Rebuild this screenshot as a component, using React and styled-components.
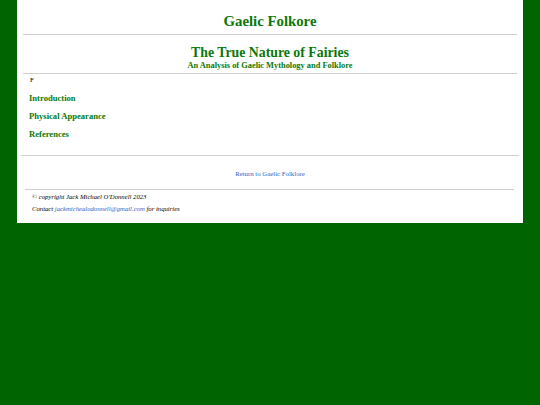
import React from "react";
import styled, { createGlobalStyle } from "styled-components";

const Global = createGlobalStyle`
  html, body { margin: 0; padding: 0; }
  body {
    background: #006400;
    font-family: "Liberation Serif", "Times New Roman", serif;
    color: #000;
    min-height: 405px;
  }
`;

const Page = styled.div`
  background: #fff;
  margin: 0 17px;
  padding: 12px 0 9px;
`;

const Rule = styled.hr`
  border: 0;
  height: 1px;
  background: #cfcfcf;
  margin: ${(p) => p.$margin || "0"};
`;

const SiteTitle = styled.h1`
  margin: 0 0 4px;
  text-align: center;
  color: #0a780a;
  font-size: 14.8px;
  line-height: 18px;
  font-weight: bold;
`;

const ArticleHead = styled.header`
  text-align: center;
  color: #0a780a;
  padding: 10px 0 2px;
`;

const ArticleTitle = styled.h2`
  margin: 0;
  font-size: 13.8px;
  line-height: 16px;
  font-weight: bold;
`;

const Subtitle = styled.h3`
  margin: 0;
  font-size: 8.4px;
  line-height: 10px;
  font-weight: bold;
`;

const Body = styled.main`
  padding: 2px 12px 12px;
`;

const Fragment = styled.p`
  margin: 0 0 4px 1px;
  font-size: 7px;
  line-height: 9px;
`;

const Nav = styled.nav`
  display: flex;
  flex-direction: column;
`;

const NavLink = styled.a`
  color: #0a780a;
  font-weight: bold;
  font-size: 8.6px;
  line-height: 18px;
  text-decoration: none;
`;

const ReturnRow = styled.div`
  text-align: center;
  padding: 13px 0 11px;
  font-size: 6.8px;
  line-height: 9px;
`;

const BlueLink = styled.a`
  color: #2f5fc4;
  text-decoration: none;
`;

const Footer = styled.footer`
  padding: 1px 15px 0;
  font-style: italic;
  font-size: 6.7px;
  line-height: 11.5px;
`;

const FooterLine = styled.p`
  margin: 0;
`;

export default function App() {
  return (
    <>
      <Global />
      <Page>
        <SiteTitle>Gaelic Folkore</SiteTitle>
        <Rule $margin="0 6px" />
        <ArticleHead>
          <ArticleTitle>The True Nature of Fairies</ArticleTitle>
          <Subtitle>An Analysis of Gaelic Mythology and Folklore</Subtitle>
        </ArticleHead>
        <Rule $margin="0 6px" />
        <Body>
          <Fragment>F</Fragment>
          <Nav>
            <NavLink href="#introduction">Introduction</NavLink>
            <NavLink href="#appearance">Physical Appearance</NavLink>
            <NavLink href="#references">References</NavLink>
          </Nav>
        </Body>
        <Rule $margin="0 4px" />
        <ReturnRow>
          <BlueLink href="#home">Return to Gaelic Folklore</BlueLink>
        </ReturnRow>
        <Rule $margin="0 9px 0 8px" />
        <Footer>
          <FooterLine>© copyright Jack Michael O'Donnell 2023</FooterLine>
          <FooterLine>
            Contact <BlueLink href="mailto:jackmichealodonnell@gmail.com">jackmichealodonnell@gmail.com</BlueLink> for inquiries
          </FooterLine>
        </Footer>
      </Page>
    </>
  );
}
